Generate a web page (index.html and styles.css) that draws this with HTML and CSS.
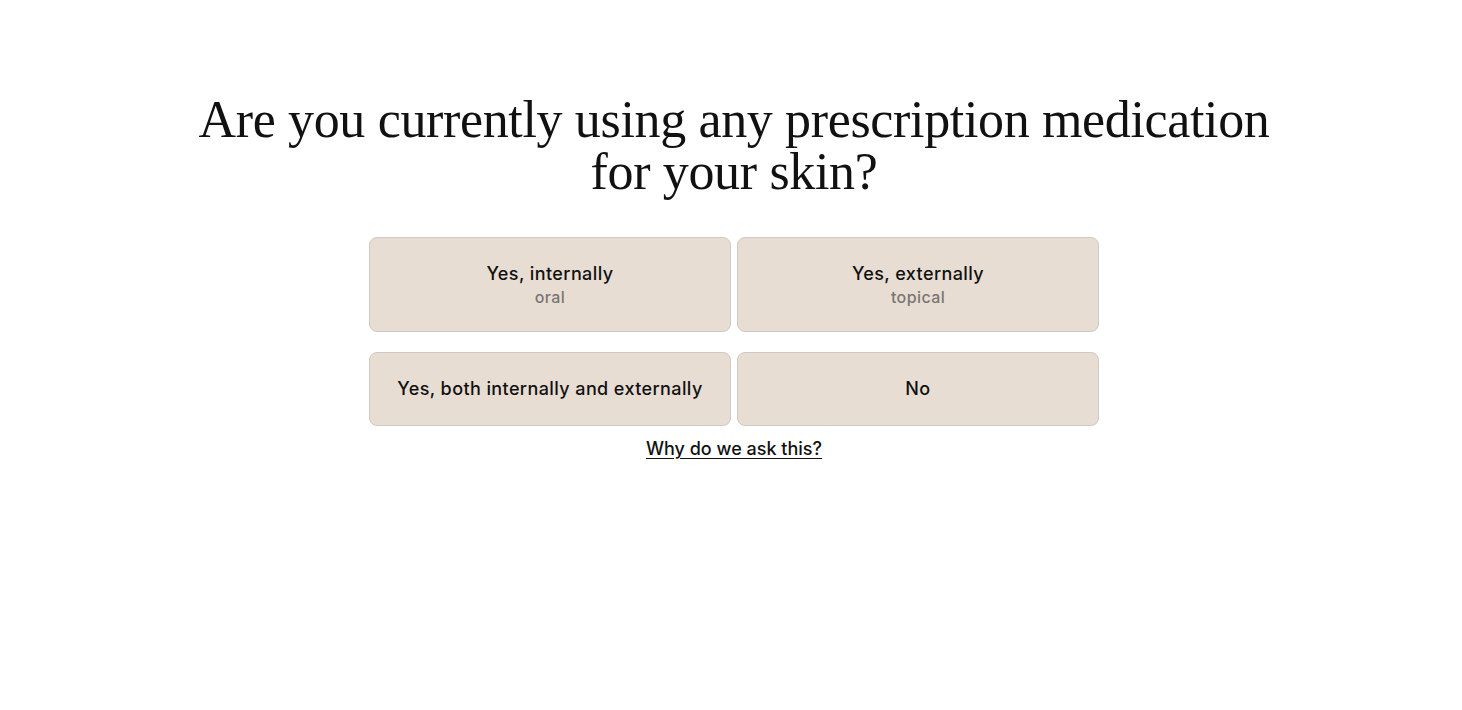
FILE: index.html
```html
<!DOCTYPE html>
<html lang="en">
<head>
<meta charset="utf-8">
<title>Prescription medication</title>
<link rel="stylesheet" href="styles.css">
</head>
<body>
<main class="page">
  <h1 class="question">Are you currently using any prescription medication<br>for your skin?</h1>
  <div class="options">
    <button class="option tall"><span class="label">Yes, internally</span><span class="sub">oral</span></button>
    <button class="option tall"><span class="label">Yes, externally</span><span class="sub">topical</span></button>
    <button class="option"><span class="label">Yes, both internally and externally</span></button>
    <button class="option"><span class="label">No</span></button>
  </div>
  <a class="why" href="#">Why do we ask this?</a>
</main>
</body>
</html>
```

FILE: styles.css
```css
html, body {
  margin: 0;
  padding: 0;
  background: #ffffff;
}
.page {
  display: flex;
  flex-direction: column;
  align-items: center;
  padding: 94px 0 0 6px;
  font-family: "Inter", "Liberation Sans", sans-serif;
  color: #111;
}
.question {
  margin: 0;
  font-family: "Liberation Serif", "DejaVu Serif", serif;
  font-weight: 400;
  font-size: 52px;
  line-height: 52px;
  text-align: center;
  color: #111;
  letter-spacing: -0.35px;
}
.options {
  margin-top: 39px;
  display: grid;
  grid-template-columns: 362px 362px;
  column-gap: 6px;
  row-gap: 20px;
}
.option {
  display: flex;
  flex-direction: column;
  align-items: center;
  justify-content: center;
  height: 74px;
  box-sizing: border-box;
  background: #e8ddd3;
  border: 1px solid #cfc9c4;
  border-radius: 8px;
  font-family: inherit;
  padding: 0;
  cursor: pointer;
}
.option.tall {
  height: 95px;
}
.label {
  font-size: 18px;
  font-weight: 500;
  letter-spacing: 0.4px;
  color: #111;
  line-height: 24px;
}
.sub {
  font-size: 16px;
  font-weight: 500;
  letter-spacing: 0.4px;
  color: #7a7672;
  line-height: 22px;
}
.why {
  margin-top: 11px;
  font-size: 18px;
  font-weight: 500;
  letter-spacing: 0;
  color: #111;
  text-decoration: underline;
  text-underline-offset: 3px;
  line-height: 24px;
}
```
